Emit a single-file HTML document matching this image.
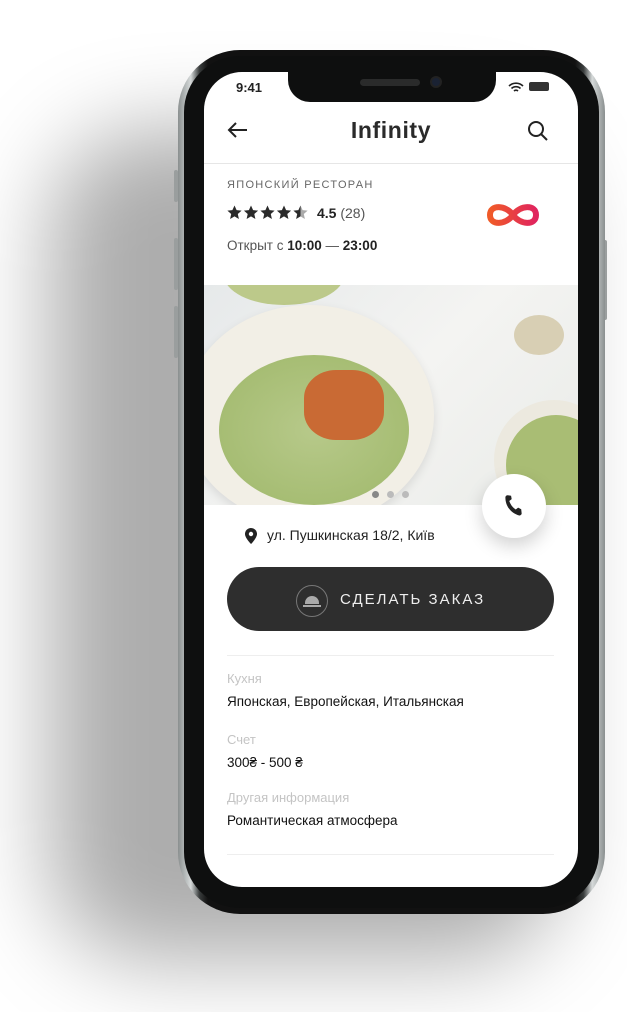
<!DOCTYPE html>
<html><head><meta charset="utf-8"><style>
*{margin:0;padding:0;box-sizing:border-box}
body{width:627px;height:1012px;background:#fff;position:relative;overflow:hidden;font-family:"Liberation Sans",sans-serif;color:#222}
.shadow{position:absolute;left:50px;top:130px;width:510px;height:830px;border-radius:100px;background:rgba(0,0,0,.32);filter:blur(45px)}
.phone{position:absolute;left:178px;top:50px;width:427px;height:864px;border-radius:62px;background:linear-gradient(90deg,#8a8f8f,#d6dada 3%,#3a3d3d 5%,#111 7%,#111 93%,#3a3d3d 95%,#d6dada 97%,#8a8f8f)}
.inner{position:absolute;left:184px;top:56px;width:415px;height:852px;border-radius:56px;background:#0e0f0f}
.btn{position:absolute;background:#9a9e9e;width:4px;border-radius:2px}
.screen{position:absolute;left:204px;top:72px;width:374px;height:815px;border-radius:38px;background:#fff;overflow:hidden}
.notch{position:absolute;left:84px;top:0;width:208px;height:30px;background:#0e0f0f;border-radius:0 0 22px 22px}
.abs{position:absolute}
.lbl{font-size:13px;color:#c4c4c4}
.val{font-size:13.5px;color:#111}
</style></head><body>
<div class="shadow"></div>
<div class="btn" style="left:174px;top:170px;height:32px"></div>
<div class="btn" style="left:174px;top:238px;height:52px"></div>
<div class="btn" style="left:174px;top:306px;height:52px"></div>
<div class="btn" style="left:603px;top:240px;height:80px"></div>
<div class="phone"></div>
<div class="inner"></div>
<div class="screen">
 <div class="notch"><div class="abs" style="left:72px;top:7px;width:60px;height:7px;border-radius:4px;background:#2a2b2b"></div><div class="abs" style="left:142px;top:4px;width:12px;height:12px;border-radius:6px;background:#1a2233;border:2px solid #222"></div></div>
 <div class="abs" style="left:32px;top:8px;font-size:13px;font-weight:bold;color:#222">9:41</div>
 <svg class="abs" style="left:304px;top:10px" width="16" height="11" viewBox="0 0 16 11"><path d="M1 4a10 10 0 0 1 14 0M3.5 6.5a6.5 6.5 0 0 1 9 0M6 9a3 3 0 0 1 4 0" stroke="#222" stroke-width="1.6" fill="none"/></svg>
 <div class="abs" style="left:325px;top:10px;width:20px;height:9px;border-radius:2px;background:#333"></div>
 <svg class="abs" style="left:22px;top:48px" width="24" height="20" viewBox="0 0 24 20"><path d="M21 10H3M10 3L3 10l7 7" stroke="#222" stroke-width="2" fill="none"/></svg>
 <div class="abs" style="left:0;width:374px;top:45px;text-align:center;font-size:23px;font-weight:bold;letter-spacing:.6px;color:#2a2a2a">Infinity</div>
 <svg class="abs" style="left:323px;top:48px" width="22" height="22" viewBox="0 0 22 22"><circle cx="9" cy="9" r="7" stroke="#222" stroke-width="2" fill="none"/><path d="M14 14l6 6" stroke="#222" stroke-width="2"/></svg>
 <div class="abs" style="left:0;top:91px;width:374px;height:1px;background:#e6e6e6"></div>
 <div class="abs" style="left:23px;top:107px;font-size:11px;letter-spacing:1.3px;color:#666">ЯПОНСКИЙ РЕСТОРАН</div>
 <svg class="abs" style="left:23px;top:133px" width="84" height="16" viewBox="0 0 84 16">
  <defs><path id="s" d="M7.5 0.5l2.1 4.6 5 .5-3.8 3.4 1.1 5-4.4-2.6-4.4 2.6 1.1-5L0.4 5.6l5-.5z"/><linearGradient id="h"><stop offset=".5" stop-color="#2a2a2a"/><stop offset=".5" stop-color="#aaa"/></linearGradient></defs>
  <use href="#s" x="0" fill="#2a2a2a"/><use href="#s" x="16.5" fill="#2a2a2a"/><use href="#s" x="33" fill="#2a2a2a"/><use href="#s" x="49.5" fill="#2a2a2a"/><use href="#s" x="66" fill="url(#h)"/>
 </svg>
 <div class="abs" style="left:113px;top:133px;font-size:14px;color:#222"><b>4.5</b> <span style="color:#555">(28)</span></div>
 <div class="abs" style="left:23px;top:166px;font-size:13.5px;color:#555">Открыт с <b style="color:#222">10:00</b> — <b style="color:#222">23:00</b></div>
 <svg class="abs" style="left:280px;top:128px" width="58" height="30" viewBox="0 0 58 30"><defs><linearGradient id="g" x1="0" x2="1"><stop offset="0" stop-color="#f05a28"/><stop offset="1" stop-color="#e0245e"/></linearGradient></defs><path d="M29 15C22 5 6 4 6 15s16 10 23 0 23-11 23 0-16 10-23 0z" stroke="url(#g)" stroke-width="6" fill="none"/></svg>
 <div class="abs" style="left:0;top:213px;width:374px;height:220px;overflow:hidden;background:linear-gradient(135deg,#e6e9ea,#f4f4f2 50%,#e9ebe8)">
  <div class="abs" style="left:20px;top:-40px;width:120px;height:60px;border-radius:50%;background:#bcc98a"></div>
  <div class="abs" style="left:-20px;top:20px;width:250px;height:220px;border-radius:50%;background:#f2efe6;box-shadow:0 4px 10px rgba(0,0,0,.1)"></div>
  <div class="abs" style="left:15px;top:70px;width:190px;height:150px;border-radius:50%;background:radial-gradient(#b7c98a,#9fb86a)"></div>
  <div class="abs" style="left:100px;top:85px;width:80px;height:70px;border-radius:40%;background:#c96a34"></div>
  <div class="abs" style="left:290px;top:115px;width:120px;height:120px;border-radius:50%;background:#ece9df"></div>
  <div class="abs" style="left:302px;top:130px;width:100px;height:100px;border-radius:50%;background:#a9bd74"></div>
  <div class="abs" style="left:310px;top:30px;width:50px;height:40px;border-radius:50%;background:#d8cfb4"></div>
  <div class="abs" style="left:168px;top:206px;width:7px;height:7px;border-radius:50%;background:#888"></div>
  <div class="abs" style="left:183px;top:206px;width:7px;height:7px;border-radius:50%;background:#bbb"></div>
  <div class="abs" style="left:198px;top:206px;width:7px;height:7px;border-radius:50%;background:#bbb"></div>
 </div>
 <div class="abs" style="left:278px;top:402px;width:64px;height:64px;border-radius:50%;background:#fff;box-shadow:0 8px 18px rgba(0,0,0,.18)"></div>
 <svg class="abs" style="left:297px;top:421px" width="26" height="26" viewBox="0 0 24 24"><path d="M19 14l-3 -1-2 2c-3-1.5-5.5-4-7-7l2-2-1-3-3 0c-1 0-2 1-2 2 1 8 7 14 15 15 1 0 2-1 2-2z" fill="#222" transform="rotate(8 12 12)"/></svg>
 <svg class="abs" style="left:41px;top:456px" width="12" height="16" viewBox="0 0 12 16"><path d="M6 0a6 6 0 0 0-6 6c0 4 6 10 6 10s6-6 6-10a6 6 0 0 0-6-6z" fill="#222"/><circle cx="6" cy="6" r="2.2" fill="#fff"/></svg>
 <div class="abs" style="left:63px;top:455px;font-size:14px;color:#222">ул. Пушкинская 18/2, Київ</div>
 <div class="abs" style="left:23px;top:495px;width:327px;height:64px;border-radius:32px;background:#2e2e2e"></div>
 <div class="abs" style="left:92px;top:513px;width:32px;height:32px;border-radius:50%;border:1px solid #777"></div>
 <div class="abs" style="left:101px;top:524px;width:14px;height:8px;border-radius:7px 7px 0 0;background:#aaa"></div>
 <div class="abs" style="left:99px;top:533px;width:18px;height:2px;background:#aaa"></div>
 <div class="abs" style="left:136px;top:519px;font-size:15px;letter-spacing:2px;color:#eee">СДЕЛАТЬ ЗАКАЗ</div>
 <div class="abs" style="left:23px;top:583px;width:327px;height:1px;background:#eee"></div>
 <div class="abs lbl" style="left:23px;top:599px">Кухня</div>
 <div class="abs val" style="left:23px;top:622px">Японская, Европейская, Итальянская</div>
 <div class="abs lbl" style="left:23px;top:660px">Счет</div>
 <div class="abs val" style="left:23px;top:683px">300₴ - 500 ₴</div>
 <div class="abs lbl" style="left:23px;top:718px">Другая информация</div>
 <div class="abs val" style="left:23px;top:741px">Романтическая атмосфера</div>
 <div class="abs" style="left:23px;top:782px;width:327px;height:1px;background:#eee"></div>
</div>
</body></html>
